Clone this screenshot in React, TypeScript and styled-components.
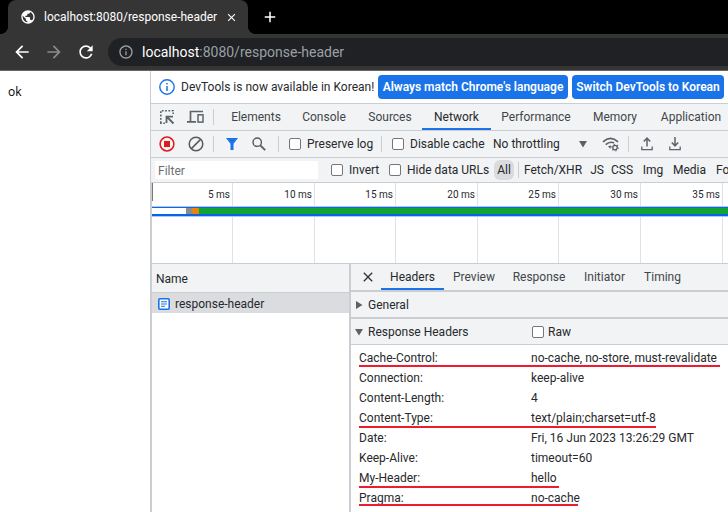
import React from "react";
import styled, { createGlobalStyle, css } from "styled-components";
import { MdAdd, MdArrowBack, MdArrowForward, MdClose, MdInfoOutline, MdPublic, MdRefresh } from "react-icons/md";

const line = "#cacdd1";
const panel = "#f1f3f4";
const blue = "#1a73e8";
const ink = "#27292c";
const grey = "#5f6368";

const GlobalStyle = createGlobalStyle`
  * { box-sizing: border-box; }
  html, body, #root { height: 100%; }
  body {
    margin: 0;
    overflow: hidden;
    background: #fff;
    color: ${ink};
    font: 12px/16px Roboto, "Open Sans", sans-serif;
  }
  button, input, select { font: inherit; color: inherit; margin: 0; }
  svg { flex: none; display: block; }
`;

const Window = styled.div`
  min-height: 100%;
  display: flex;
  flex-direction: column;
`;

const TabStrip = styled.header`
  display: flex;
  height: 34px;
  padding-left: 8px;
  background: #000;
`;

const BrowserTab = styled.div`
  position: relative;
  display: flex;
  align-items: center;
  width: 240px;
  padding: 0 10px 0 12px;
  gap: 8px;
  background: #353535;
  color: #fff;
  border-radius: 8px 8px 0 0;
  white-space: nowrap;
  &::before, &::after {
    content: "";
    position: absolute;
    bottom: 0;
    width: 8px;
    height: 8px;
  }
  &::before { left: -8px; background: radial-gradient(circle at 0 0, #000 8px, #353535 8px); }
  &::after { right: -8px; background: radial-gradient(circle at 100% 0, #000 8px, #353535 8px); }
`;

const TabTitle = styled.span`
  flex: 1;
`;

const IconButton = styled.button<{ $tone?: string }>`
  display: flex;
  flex: none;
  align-items: center;
  justify-content: center;
  padding: 0;
  border: 0;
  background: none;
  color: ${(p) => p.$tone ?? grey};
`;

const NewTab = styled(IconButton)`
  width: 28px;
  margin-left: 8px;
`;

const AddressBar = styled.nav`
  display: flex;
  align-items: center;
  height: 37px;
  padding-left: 12px;
  gap: 12px;
  background: #353535;
  border-bottom: 1px solid #666;
`;

const Omnibox = styled.div`
  flex: 1;
  display: flex;
  align-items: center;
  gap: 8px;
  height: 28px;
  padding-left: 10px;
  border-radius: 14px 0 0 14px;
  background: #202124;
  color: #9aa0a6;
  font-size: 14px;
  white-space: nowrap;
`;

const Host = styled.span`
  color: #fff;
`;

const Body = styled.div`
  flex: 1;
  display: grid;
  grid-template-columns: 150px minmax(0, 1fr);
`;

const Page = styled.pre`
  margin: 0;
  padding: 13px 8px;
  color: #000;
  font: 12px/16px "Open Sans", sans-serif;
`;

const DevTools = styled.section`
  display: flex;
  flex-direction: column;
  border-left: 1px solid ${line};
  overflow: hidden;
  white-space: nowrap;
`;

const bar = css`
  display: flex;
  align-items: center;
  flex: none;
  border-bottom: 1px solid ${line};
`;

const InfoBar = styled.div`
  ${bar}
  height: 33px;
  padding-left: 8px;
  gap: 4px;
`;

const InfoText = styled.span`
  width: 195px;
  padding-left: 2px;
`;

const ActionButton = styled.button<{ $width: number }>`
  flex: none;
  width: ${(p) => p.$width}px;
  height: 24px;
  padding: 0;
  border: 0;
  border-radius: 4px;
  background: ${blue};
  color: #fff;
  font-weight: 600;
`;

const ToolBar = styled.div<{ $height: number }>`
  ${bar}
  height: ${(p) => p.$height}px;
  background: ${panel};
`;

const IconSlot = styled(IconButton)<{ $width: number }>`
  width: ${(p) => p.$width}px;
`;

const CloseDetail = styled(IconButton)`
  width: 30px;
  padding-left: 4px;
`;

const Divider = styled.span<{ $before?: number; $after?: number }>`
  flex: none;
  width: 1px;
  height: 16px;
  margin-left: ${(p) => p.$before ?? 0}px;
  margin-right: ${(p) => p.$after ?? 0}px;
  background: ${line};
`;

const Tab = styled.button<{ $width: number; $active?: boolean }>`
  flex: none;
  align-self: stretch;
  width: ${(p) => p.$width}px;
  padding: 0;
  border: 0;
  background: none;
  color: ${(p) => (p.$active ? ink : "#42464a")};
  box-shadow: ${(p) => (p.$active ? `inset 0 -2px ${blue}` : "none")};
`;

const Check = styled.label<{ $width: number; $gap?: number }>`
  display: flex;
  align-items: center;
  flex: none;
  gap: ${(p) => p.$gap ?? 6}px;
  width: ${(p) => p.$width}px;
`;

const CheckInput = styled.input`
  appearance: none;
  flex: none;
  width: 12px;
  height: 12px;
  border: 1px solid #767676;
  border-radius: 2px;
  background: #fff;
`;

const Throttle = styled.div`
  display: flex;
  align-items: center;
  flex: none;
  width: 94px;
  margin: 0 6px 0 11px;
`;

const Select = styled.select`
  flex: 1;
  appearance: none;
  padding: 0;
  border: 0;
  background: none;
`;

const FilterInput = styled.input`
  flex: none;
  width: 163px;
  height: 18px;
  margin: 0 13px 0 4px;
  padding: 2px 3px 0;
  border: 0;
  background: #fff;
  &::placeholder { color: #6b6f73; }
`;

const Kind = styled.button<{ $width: number; $active?: boolean }>`
  flex: none;
  width: ${(p) => p.$width}px;
  height: 20px;
  padding: 0;
  border: 0;
  border-radius: 6px;
  background: ${(p) => (p.$active ? "#d9dbde" : "none")};
`;

const Overview = styled.div`
  position: relative;
  display: flex;
  flex: none;
  height: 81px;
  border-left: 1px solid ${line};
  border-bottom: 1px solid ${line};
  overflow: hidden;
`;

const Tick = styled.div<{ $width: number }>`
  flex: none;
  width: ${(p) => p.$width}px;
  padding: 4px 2px;
  border-right: 1px solid #dfe1e4;
  font-size: 10px;
  text-align: right;
`;

const Handle = styled.span`
  position: absolute;
  top: 0;
  left: 0;
  width: 1px;
  height: 18px;
  background: #777;
`;

const Timeline = styled.div`
  position: absolute;
  top: 24px;
  left: 0;
  right: 0;
  display: flex;
  height: 9px;
  border-top: 1px solid #1763e0;
  border-bottom: 2px solid #0b62e8;
  outline: 1px solid #a9c9f8;
`;

const Segment = styled.span<{ $width?: number; $color: string }>`
  flex: ${(p) => (p.$width ? "none" : 1)};
  width: ${(p) => p.$width ?? 0}px;
  background: ${(p) => p.$color};
`;

const Split = styled.div`
  flex: 1;
  display: grid;
  grid-template-columns: 197px minmax(0, 1fr);
  border-left: 1px solid ${line};
`;

const Requests = styled.table`
  align-self: start;
  width: 100%;
  border-collapse: collapse;
  text-align: left;
`;

const NameHead = styled.th`
  height: 28px;
  padding: 2px 4px 0;
  border-bottom: 1px solid ${line};
  background: ${panel};
  font-weight: 400;
`;

const NameCell = styled.td`
  height: 21px;
  padding: 2px 6px 0;
  background: #dadce0;
`;

const FileName = styled.span`
  display: flex;
  align-items: center;
  gap: 5px;
`;

const Detail = styled.div`
  border-left: 2px solid ${line};
`;

const DetailTabs = styled.div`
  ${bar}
  height: 28px;
  background: ${panel};
  border-bottom-width: 2px;
`;

const SectionHead = styled.div<{ $thick?: number }>`
  ${bar}
  height: ${(p) => (p.$thick === 2 ? 27 : 26)}px;
  border-bottom-width: ${(p) => p.$thick ?? 1}px;
  background: ${panel};
`;

const Toggle = styled.button`
  display: flex;
  align-items: center;
  gap: 5px;
  width: 181px;
  padding: 0 0 0 4px;
  border: 0;
  background: none;
`;

const Headers = styled.dl`
  margin: 0;
  padding-top: 3px;
`;

const HeaderRow = styled.div`
  position: relative;
  display: grid;
  grid-template-columns: 172px 1fr;
  height: 20px;
  align-items: center;
  margin-left: 8px;
`;

const Term = styled.dt``;

const Value = styled.dd`
  margin: 0;
`;

const Marker = styled.span<{ $width: number; $rise: number }>`
  position: absolute;
  left: 0;
  bottom: ${(p) => p.$rise}px;
  width: ${(p) => p.$width}px;
  height: 2px;
  background: #ed1c2e;
`;

const kinds = [
  { label: "Fetch/XHR", width: 68 },
  { label: "JS", width: 20 },
  { label: "CSS", width: 30 },
  { label: "Img", width: 32 },
  { label: "Media", width: 41 },
  { label: "Font", width: 36 },
];

const ticks = [
  { ms: 5, width: 81 },
  { ms: 10, width: 82 },
  { ms: 15, width: 81 },
  { ms: 20, width: 82 },
  { ms: 25, width: 81 },
  { ms: 30, width: 82 },
  { ms: 35, width: 82 },
];

const headers = [
  { name: "Cache-Control", value: "no-cache, no-store, must-revalidate", mark: 361, rise: 1 },
  { name: "Connection", value: "keep-alive" },
  { name: "Content-Length", value: "4" },
  { name: "Content-Type", value: "text/plain;charset=utf-8", mark: 297, rise: 0 },
  { name: "Date", value: "Fri, 16 Jun 2023 13:26:29 GMT" },
  { name: "Keep-Alive", value: "timeout=60" },
  { name: "My-Header", value: "hello", mark: 200, rise: 0 },
  { name: "Pragma", value: "no-cache", mark: 219, rise: 2 },
];

const InspectIcon = () => (
  <svg width="16" height="16" viewBox="0 0 16 16" fill="none" stroke={grey}>
    <path d="M1.8 14V1.8H14.2V5" strokeWidth="1.6" strokeDasharray="1.8 1.5" />
    <path d="M1 14.2H6" strokeWidth="1.6" strokeDasharray="1.8 1.5" />
    <path d="M14.5 14.5 8 8M7.5 14V7.7H14" strokeWidth="1.8" />
  </svg>
);

const DevicesIcon = () => (
  <svg width="18" height="14" viewBox="0 0 18 14" fill="none" stroke={grey} strokeWidth="1.7">
    <path d="M3.5 11V1.5H16M0 11.8H9" />
    <rect x="11" y="4.8" width="5" height="7.3" strokeWidth="1.5" />
  </svg>
);

const RecordIcon = () => (
  <svg width="16" height="16" viewBox="0 0 16 16">
    <circle cx="8" cy="8" r="6.9" fill="none" stroke="#dd1c1c" strokeWidth="1.5" />
    <rect x="5" y="5" width="6" height="6" fill="#d91d1d" />
  </svg>
);

const ClearIcon = () => (
  <svg width="16" height="16" viewBox="0 0 16 16" fill="none" stroke="#5a5a5a" strokeWidth="1.5">
    <circle cx="8" cy="8" r="6.8" />
    <path d="M3.4 12.6 12.6 3.4" />
  </svg>
);

const FunnelIcon = () => (
  <svg width="12" height="12" viewBox="0 0 12 12">
    <path d="M0 0H12L7.5 5.8V12H4.5V5.8Z" fill={blue} />
  </svg>
);

const SearchIcon = () => (
  <svg width="14" height="14" viewBox="0 0 14 14" fill="none" stroke="#5a5a5a">
    <circle cx="5.2" cy="5.2" r="4.2" strokeWidth="1.4" />
    <path d="M8.3 8.3 13.2 13.2" strokeWidth="1.8" />
  </svg>
);

const NetworkIcon = () => (
  <svg width="18" height="15" viewBox="0 0 18 15" fill="none" stroke="#5a5f64">
    <path d="M1 4.8Q8.5-2 16 4.8" strokeWidth="1.7" />
    <path d="M3.7 7.6Q7.5 4.2 12 5.8" strokeWidth="1.6" />
    <path d="M6 9.3 9 8.5 8.5 12Z" fill="#5a5f64" stroke="none" />
    <circle cx="13" cy="10.6" r="2.2" strokeWidth="1.3" />
    <circle cx="13" cy="10.6" r="3.3" strokeWidth="1.1" strokeDasharray="1.2 2.26" />
  </svg>
);

const TransferIcon = ({ down = false }) => (
  <svg width="12" height="14" viewBox="0 0 12 14" fill="none" stroke={grey} strokeWidth="1.5">
    <path d={down ? "M6 0V8.5M2.8 5.5 6 8.8 9.2 5.5" : "M6 9.5V1.2M2.8 4.5 6 1.2 9.2 4.5"} />
    <path d="M.8 9.5V12.6H11.2V9.5" strokeWidth="1.3" />
  </svg>
);

const InfoIcon = () => (
  <svg width="16" height="16" viewBox="0 0 16 16" fill="none" stroke={blue}>
    <circle cx="8" cy="8" r="7.2" strokeWidth="1.4" />
    <path d="M8 7V12M8 4V5.6" strokeWidth="1.5" />
  </svg>
);

const FileIcon = () => (
  <svg width="12" height="12" viewBox="0 0 12 12" fill="none" stroke={blue}>
    <rect x=".8" y=".8" width="10.4" height="10.4" rx="1" strokeWidth="1.6" fill="#fff" />
    <path d="M3 3.8H9M3 6H9M3 8.2H7" strokeWidth="1.1" />
  </svg>
);

const Caret = ({ open = false }) => (
  <svg width="8" height="8" viewBox="0 0 8 8" fill="#606060">
    <path d={open ? "M0 1H8L4 7.5Z" : "M1 0 7.5 4 1 8Z"} />
  </svg>
);

export default function App() {
  return (
    <Window>
      <GlobalStyle />
      <TabStrip>
        <BrowserTab>
          <MdPublic size={16} />
          <TabTitle>localhost:8080/response-header</TabTitle>
          <IconButton $tone="#fff" aria-label="Close tab"><MdClose size={13} /></IconButton>
        </BrowserTab>
        <NewTab $tone="#fff" aria-label="New tab"><MdAdd size={18} /></NewTab>
      </TabStrip>
      <AddressBar>
        <IconButton $tone="#fff" aria-label="Back"><MdArrowBack size={20} /></IconButton>
        <IconButton $tone="#8b8b8b" aria-label="Forward"><MdArrowForward size={20} /></IconButton>
        <IconButton $tone="#fff" aria-label="Reload"><MdRefresh size={20} /></IconButton>
        <Omnibox>
          <MdInfoOutline size={16} />
          <span><Host>localhost</Host>:8080/response-header</span>
        </Omnibox>
      </AddressBar>
      <Body>
        <Page>ok</Page>
        <DevTools>
          <InfoBar>
            <InfoIcon />
            <InfoText>DevTools is now available in Korean!</InfoText>
            <ActionButton $width={190}>Always match Chrome's language</ActionButton>
            <ActionButton $width={152}>Switch DevTools to Korean</ActionButton>
          </InfoBar>
          <ToolBar $height={27}>
            <IconSlot $width={32} aria-label="Inspect"><InspectIcon /></IconSlot>
            <IconSlot $width={26} aria-label="Device toolbar"><DevicesIcon /></IconSlot>
            <Divider $before={4} $after={8} />
            <Tab $width={68}>Elements</Tab>
            <Tab $width={68}>Console</Tab>
            <Tab $width={64}>Sources</Tab>
            <Tab $width={69} $active>Network</Tab>
            <Tab $width={90}>Performance</Tab>
            <Tab $width={68}>Memory</Tab>
            <Tab $width={84}>Application</Tab>
          </ToolBar>
          <ToolBar $height={27}>
            <IconSlot $width={32} aria-label="Record"><RecordIcon /></IconSlot>
            <IconSlot $width={26} aria-label="Clear"><ClearIcon /></IconSlot>
            <Divider $before={4} $after={5} />
            <IconSlot $width={26} aria-label="Filter"><FunnelIcon /></IconSlot>
            <IconSlot $width={28} aria-label="Search"><SearchIcon /></IconSlot>
            <Divider $before={5} $after={10} />
            <Check $width={92}><CheckInput type="checkbox" />Preserve log</Check>
            <Divider $after={10} />
            <Check $width={90}><CheckInput type="checkbox" />Disable cache</Check>
            <Throttle>
              <Select aria-label="Throttling"><option>No throttling</option></Select>
              <Caret open />
            </Throttle>
            <IconSlot $width={35} aria-label="Network conditions"><NetworkIcon /></IconSlot>
            <Divider />
            <IconSlot $width={36} aria-label="Import"><TransferIcon /></IconSlot>
            <IconSlot $width={20} aria-label="Export"><TransferIcon down /></IconSlot>
          </ToolBar>
          <ToolBar $height={25}>
            <FilterInput placeholder="Filter" aria-label="Filter" />
            <Check $width={58}><CheckInput type="checkbox" />Invert</Check>
            <Check $width={105}><CheckInput type="checkbox" />Hide data URLs</Check>
            <Kind $width={20} $active>All</Kind>
            <Divider $before={4} />
            {kinds.map((k) => <Kind key={k.label} $width={k.width}>{k.label}</Kind>)}
          </ToolBar>
          <Overview>
            {ticks.map((t) => <Tick key={t.ms} $width={t.width}>{t.ms} ms</Tick>)}
            <Handle />
            <Timeline>
              <Segment $width={34} $color="#fff" />
              <Segment $width={6} $color="#8c8c8c" />
              <Segment $width={7} $color="#e8830c" />
              <Segment $color="#0ea534" />
            </Timeline>
          </Overview>
          <Split>
            <Requests>
              <thead><tr><NameHead>Name</NameHead></tr></thead>
              <tbody><tr><NameCell><FileName><FileIcon />response-header</FileName></NameCell></tr></tbody>
            </Requests>
            <Detail>
              <DetailTabs>
                <CloseDetail $tone="#333" aria-label="Close details"><MdClose size={16} /></CloseDetail>
                <Tab $width={63} $active>Headers</Tab>
                <Tab $width={60}>Preview</Tab>
                <Tab $width={70}>Response</Tab>
                <Tab $width={61}>Initiator</Tab>
                <Tab $width={55}>Timing</Tab>
              </DetailTabs>
              <SectionHead $thick={2}><Toggle><Caret />General</Toggle></SectionHead>
              <SectionHead>
                <Toggle><Caret open />Response Headers</Toggle>
                <Check $width={60} $gap={4}><CheckInput type="checkbox" />Raw</Check>
              </SectionHead>
              <Headers>
                {headers.map((h) => (
                  <HeaderRow key={h.name}>
                    <Term>{h.name}:</Term>
                    <Value>{h.value}</Value>
                    {h.mark && <Marker $width={h.mark} $rise={h.rise ?? 0} />}
                  </HeaderRow>
                ))}
              </Headers>
            </Detail>
          </Split>
        </DevTools>
      </Body>
    </Window>
  );
}
